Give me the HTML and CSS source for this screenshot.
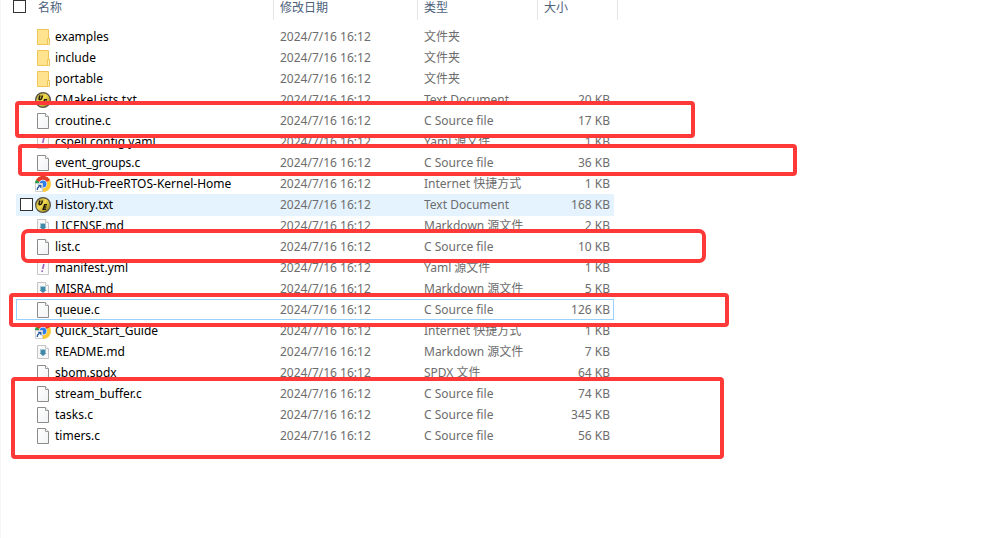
FILE: index.html
```
<!DOCTYPE html>
<html lang="zh-CN">
<head>
  <meta charset="UTF-8">
  <meta name="viewport" content="width=device-width, initial-scale=1.0">
  <title>FreeRTOS-Kernel</title>
  <link rel="stylesheet" href="styles.css">
</head>
<body>
  <!-- icon shapes -->
  <svg class="sprite" width="0" height="0" aria-hidden="true">
    <defs>
      <linearGradient id="gold" x1="0" y1="0" x2="1" y2="1">
        <stop offset="0" stop-color="#a08c30"/>
        <stop offset="0.45" stop-color="#f4dc50"/>
        <stop offset="1" stop-color="#7d6a12"/>
      </linearGradient>
      <linearGradient id="paper" x1="0" y1="0" x2="1" y2="1">
        <stop offset="0" stop-color="#ffffff"/>
        <stop offset="1" stop-color="#f1f3f4"/>
      </linearGradient>
    </defs>
    <symbol id="folder" viewBox="0 0 16 16">
      <path d="M2.5 .5h11v9h1v6h-12z" fill="#ffe38f" stroke="#efc558"/>
      <path d="M12.5 15V9.5h2v6" fill="#ffeeb5" stroke="#efc558"/>
    </symbol>
    <symbol id="file" viewBox="0 0 16 16">
      <path d="M2.5 .5h8l3 3v12h-11z" fill="url(#paper)" stroke="#8c8c8c"/>
      <path d="M10.5 .5v3h3" fill="#fff" stroke="#9c9c9c"/>
    </symbol>
    <symbol id="ue" viewBox="0 0 16 16">
      <circle cx="8" cy="8" r="7.4" fill="url(#gold)" stroke="#57524a" stroke-width="1.2"/>
      <path d="M5 3.500l-.9 3q-.2 1.300 1.200 1.100 1-.2 1.400-1.300l.8-2.800M12 7.800H9.600L8.200 12.200h2.900M9 10h2.300" fill="none" stroke="#211c0c" stroke-width="1.500"/>
    </symbol>
    <symbol id="yaml" viewBox="0 0 16 16">
      <path d="M2.5 .5h11v14h-11z" fill="#fbfbfb" stroke="#c9c9c9"/>
      <path d="M8.900 4L7.700 9M7.400 10.400L7 12" stroke="#9a62b8" stroke-width="1.600"/>
    </symbol>
    <symbol id="markdown" viewBox="0 0 16 16">
      <path d="M2.5 1.500h8l3 3v10h-11z" fill="#f8f8f8" stroke="#c4c4c4"/>
      <path d="M10.500 1.500v3h3" fill="#fff" stroke="#c4c4c4"/>
      <path d="M5.500 5l1.500 1 1-1 1 1 1.500-1v4h1L8 12 4.500 9h1z" fill="#4389a8"/>
    </symbol>
    <symbol id="chrome" viewBox="0 0 16 16">
      <circle cx="8" cy="8" r="8" fill="#fcc934"/>
      <path d="M8 8L1 4a8 8 0 0 1 14 0z" fill="#e33b2e"/>
      <path d="M8 8L1 4a8 8 0 0 0 5.500 11.900z" fill="#1e9e4a"/>
      <circle cx="8" cy="8" r="4.200" fill="#fff"/>
      <circle cx="8" cy="8" r="3.500" fill="#2e7de9"/>
      <path d="M.5 7.500h7v8h-7z" fill="#fff" stroke="#cfcfcf"/>
      <path d="M2.200 14q-.1-2.400 2-3.600" fill="none" stroke="#285d9f" stroke-width="1.400"/>
      <path d="M2.500 8.800h4v4z" fill="#285d9f"/>
    </symbol>
  </svg>

  <main id="explorer">
    <table id="files">
      <colgroup>
        <col class="col-name"><col class="col-date"><col class="col-type"><col class="col-size"><col class="col-end">
      </colgroup>
      <thead>
        <tr>
          <th><div class="head-name"><input type="checkbox" id="select-all" aria-label="全选"><span>名称</span></div></th>
          <th>修改日期</th>
          <th>类型</th>
          <th colspan="2">大小</th>
        </tr>
      </thead>
      <tbody>
        <tr>
          <td><label class="name"><input type="checkbox"><svg><use href="#folder"/></svg>examples</label></td>
          <td>2024/7/16 16:12</td><td>文件夹</td><td></td>
        </tr>
        <tr>
          <td><label class="name"><input type="checkbox"><svg><use href="#folder"/></svg>include</label></td>
          <td>2024/7/16 16:12</td><td>文件夹</td><td></td>
        </tr>
        <tr>
          <td><label class="name"><input type="checkbox"><svg><use href="#folder"/></svg>portable</label></td>
          <td>2024/7/16 16:12</td><td>文件夹</td><td></td>
        </tr>
        <tr>
          <td><label class="name"><input type="checkbox"><svg><use href="#ue"/></svg>CMakeLists.txt</label></td>
          <td>2024/7/16 16:12</td><td>Text Document</td><td>20 KB</td>
        </tr>
        <tr>
          <td><label class="name"><input type="checkbox"><svg><use href="#file"/></svg>croutine.c</label></td>
          <td>2024/7/16 16:12</td><td>C Source file</td><td>17 KB</td>
        </tr>
        <tr>
          <td><label class="name"><input type="checkbox"><svg><use href="#yaml"/></svg>cspell.config.yaml</label></td>
          <td>2024/7/16 16:12</td><td>Yaml 源文件</td><td>1 KB</td>
        </tr>
        <tr>
          <td><label class="name"><input type="checkbox"><svg><use href="#file"/></svg>event_groups.c</label></td>
          <td>2024/7/16 16:12</td><td>C Source file</td><td>36 KB</td>
        </tr>
        <tr>
          <td><label class="name"><input type="checkbox"><svg><use href="#chrome"/></svg>GitHub-FreeRTOS-Kernel-Home</label></td>
          <td>2024/7/16 16:12</td><td>Internet 快捷方式</td><td>1 KB</td>
        </tr>
        <tr class="hovered">
          <td><label class="name"><input type="checkbox"><svg><use href="#ue"/></svg>History.txt</label></td>
          <td>2024/7/16 16:12</td><td>Text Document</td><td>168 KB</td>
        </tr>
        <tr>
          <td><label class="name"><input type="checkbox"><svg><use href="#markdown"/></svg>LICENSE.md</label></td>
          <td>2024/7/16 16:12</td><td>Markdown 源文件</td><td>2 KB</td>
        </tr>
        <tr>
          <td><label class="name"><input type="checkbox"><svg><use href="#file"/></svg>list.c</label></td>
          <td>2024/7/16 16:12</td><td>C Source file</td><td>10 KB</td>
        </tr>
        <tr>
          <td><label class="name"><input type="checkbox"><svg><use href="#yaml"/></svg>manifest.yml</label></td>
          <td>2024/7/16 16:12</td><td>Yaml 源文件</td><td>1 KB</td>
        </tr>
        <tr>
          <td><label class="name"><input type="checkbox"><svg><use href="#markdown"/></svg>MISRA.md</label></td>
          <td>2024/7/16 16:12</td><td>Markdown 源文件</td><td>5 KB</td>
        </tr>
        <tr class="focused">
          <td><label class="name"><input type="checkbox"><svg><use href="#file"/></svg>queue.c</label></td>
          <td>2024/7/16 16:12</td><td>C Source file</td><td>126 KB</td>
        </tr>
        <tr>
          <td><label class="name"><input type="checkbox"><svg><use href="#chrome"/></svg>Quick_Start_Guide</label></td>
          <td>2024/7/16 16:12</td><td>Internet 快捷方式</td><td>1 KB</td>
        </tr>
        <tr>
          <td><label class="name"><input type="checkbox"><svg><use href="#markdown"/></svg>README.md</label></td>
          <td>2024/7/16 16:12</td><td>Markdown 源文件</td><td>7 KB</td>
        </tr>
        <tr>
          <td><label class="name"><input type="checkbox"><svg><use href="#file"/></svg>sbom.spdx</label></td>
          <td>2024/7/16 16:12</td><td>SPDX 文件</td><td>64 KB</td>
        </tr>
        <tr>
          <td><label class="name"><input type="checkbox"><svg><use href="#file"/></svg>stream_buffer.c</label></td>
          <td>2024/7/16 16:12</td><td>C Source file</td><td>74 KB</td>
        </tr>
        <tr>
          <td><label class="name"><input type="checkbox"><svg><use href="#file"/></svg>tasks.c</label></td>
          <td>2024/7/16 16:12</td><td>C Source file</td><td>345 KB</td>
        </tr>
        <tr>
          <td><label class="name"><input type="checkbox"><svg><use href="#file"/></svg>timers.c</label></td>
          <td>2024/7/16 16:12</td><td>C Source file</td><td>56 KB</td>
        </tr>
      </tbody>
    </table>

    <!-- red marks over the kernel sources -->
    <div class="mark mark-croutine"></div>
    <div class="mark mark-events"></div>
    <div class="mark mark-list"></div>
    <div class="mark mark-queue"></div>
    <div class="mark mark-tasks"></div>
  </main>
</body>
</html>
```
FILE: styles.css
```
* {
  box-sizing: border-box;
  margin: 0;
  padding: 0;
}

body {
  background-color: #fff;
  color: #6d6d6d;
  font-family: "Noto Sans", "Noto Sans CJK SC", sans-serif;
  font-size: 12px;
}

.sprite {
  position: absolute;
}

#explorer {
  position: relative;
  min-height: 100vh;
  padding-left: 15px;
  border-left: 1px solid #f5f5f5;
}

#files {
  width: 602px;
  table-layout: fixed;
  border-collapse: separate;
  border-spacing: 0;
}

.col-name {
  width: 258px;
}

.col-date {
  width: 144px;
}

.col-type {
  width: 120px;
}

.col-size {
  width: 76px;
}

.col-end {
  width: 4px;
}

th {
  height: 20px;
  padding-left: 6px;
  border-right: 1px solid #e5e5e5;
  color: #4c607a;
  font-family: "Noto Sans CJK SC", sans-serif;
  font-weight: normal;
  line-height: 14px;
  text-align: left;
  vertical-align: top;
}

th:first-child {
  padding-left: 0;
}

.head-name {
  display: flex;
  gap: 12px;
  margin-left: -3px;
}

tbody::before {
  content: "";
  display: block;
  height: 6px;
}

td {
  height: 21px;
  padding-left: 6px;
  line-height: 21px;
  white-space: nowrap;
}

td:first-child {
  padding-left: 4px;
}

td:nth-child(4) {
  padding: 0 4px 0 0;
  text-align: right;
}

.name {
  display: flex;
  align-items: center;
  color: #000;
}

.name svg {
  width: 16px;
  height: 16px;
  margin: 0 4px 0 2px;
}

.name input {
  visibility: hidden;
}

input[type="checkbox"] {
  appearance: none;
  width: 13px;
  height: 13px;
  border: 1px solid #333;
  background-color: #fff;
}

.hovered td {
  background-color: #e5f3ff;
  box-shadow: 0 1px 0 #e5f3ff;
}

.hovered input {
  visibility: visible;
}

.focused td {
  border: 0 solid #99d1ff;
  border-width: 1px 0;
  line-height: 19px;
}

.focused td:first-child {
  padding-left: 3px;
  border-left-width: 1px;
}

.focused td:last-child {
  padding-right: 3px;
  border-right-width: 1px;
}

.mark {
  position: absolute;
  border: 4px solid #ff3838;
  border-radius: 4px;
  pointer-events: none;
}

.mark-croutine {
  left: 14px;
  top: 101px;
  width: 680px;
  height: 37px;
}

.mark-events {
  left: 17px;
  top: 144px;
  width: 779px;
  height: 32px;
}

.mark-list {
  left: 20px;
  top: 229px;
  width: 685px;
  height: 34px;
  border-radius: 7px;
}

.mark-queue {
  left: 8px;
  top: 293px;
  width: 720px;
  height: 34px;
}

.mark-tasks {
  left: 10px;
  top: 377px;
  width: 713px;
  height: 82px;
}
```
